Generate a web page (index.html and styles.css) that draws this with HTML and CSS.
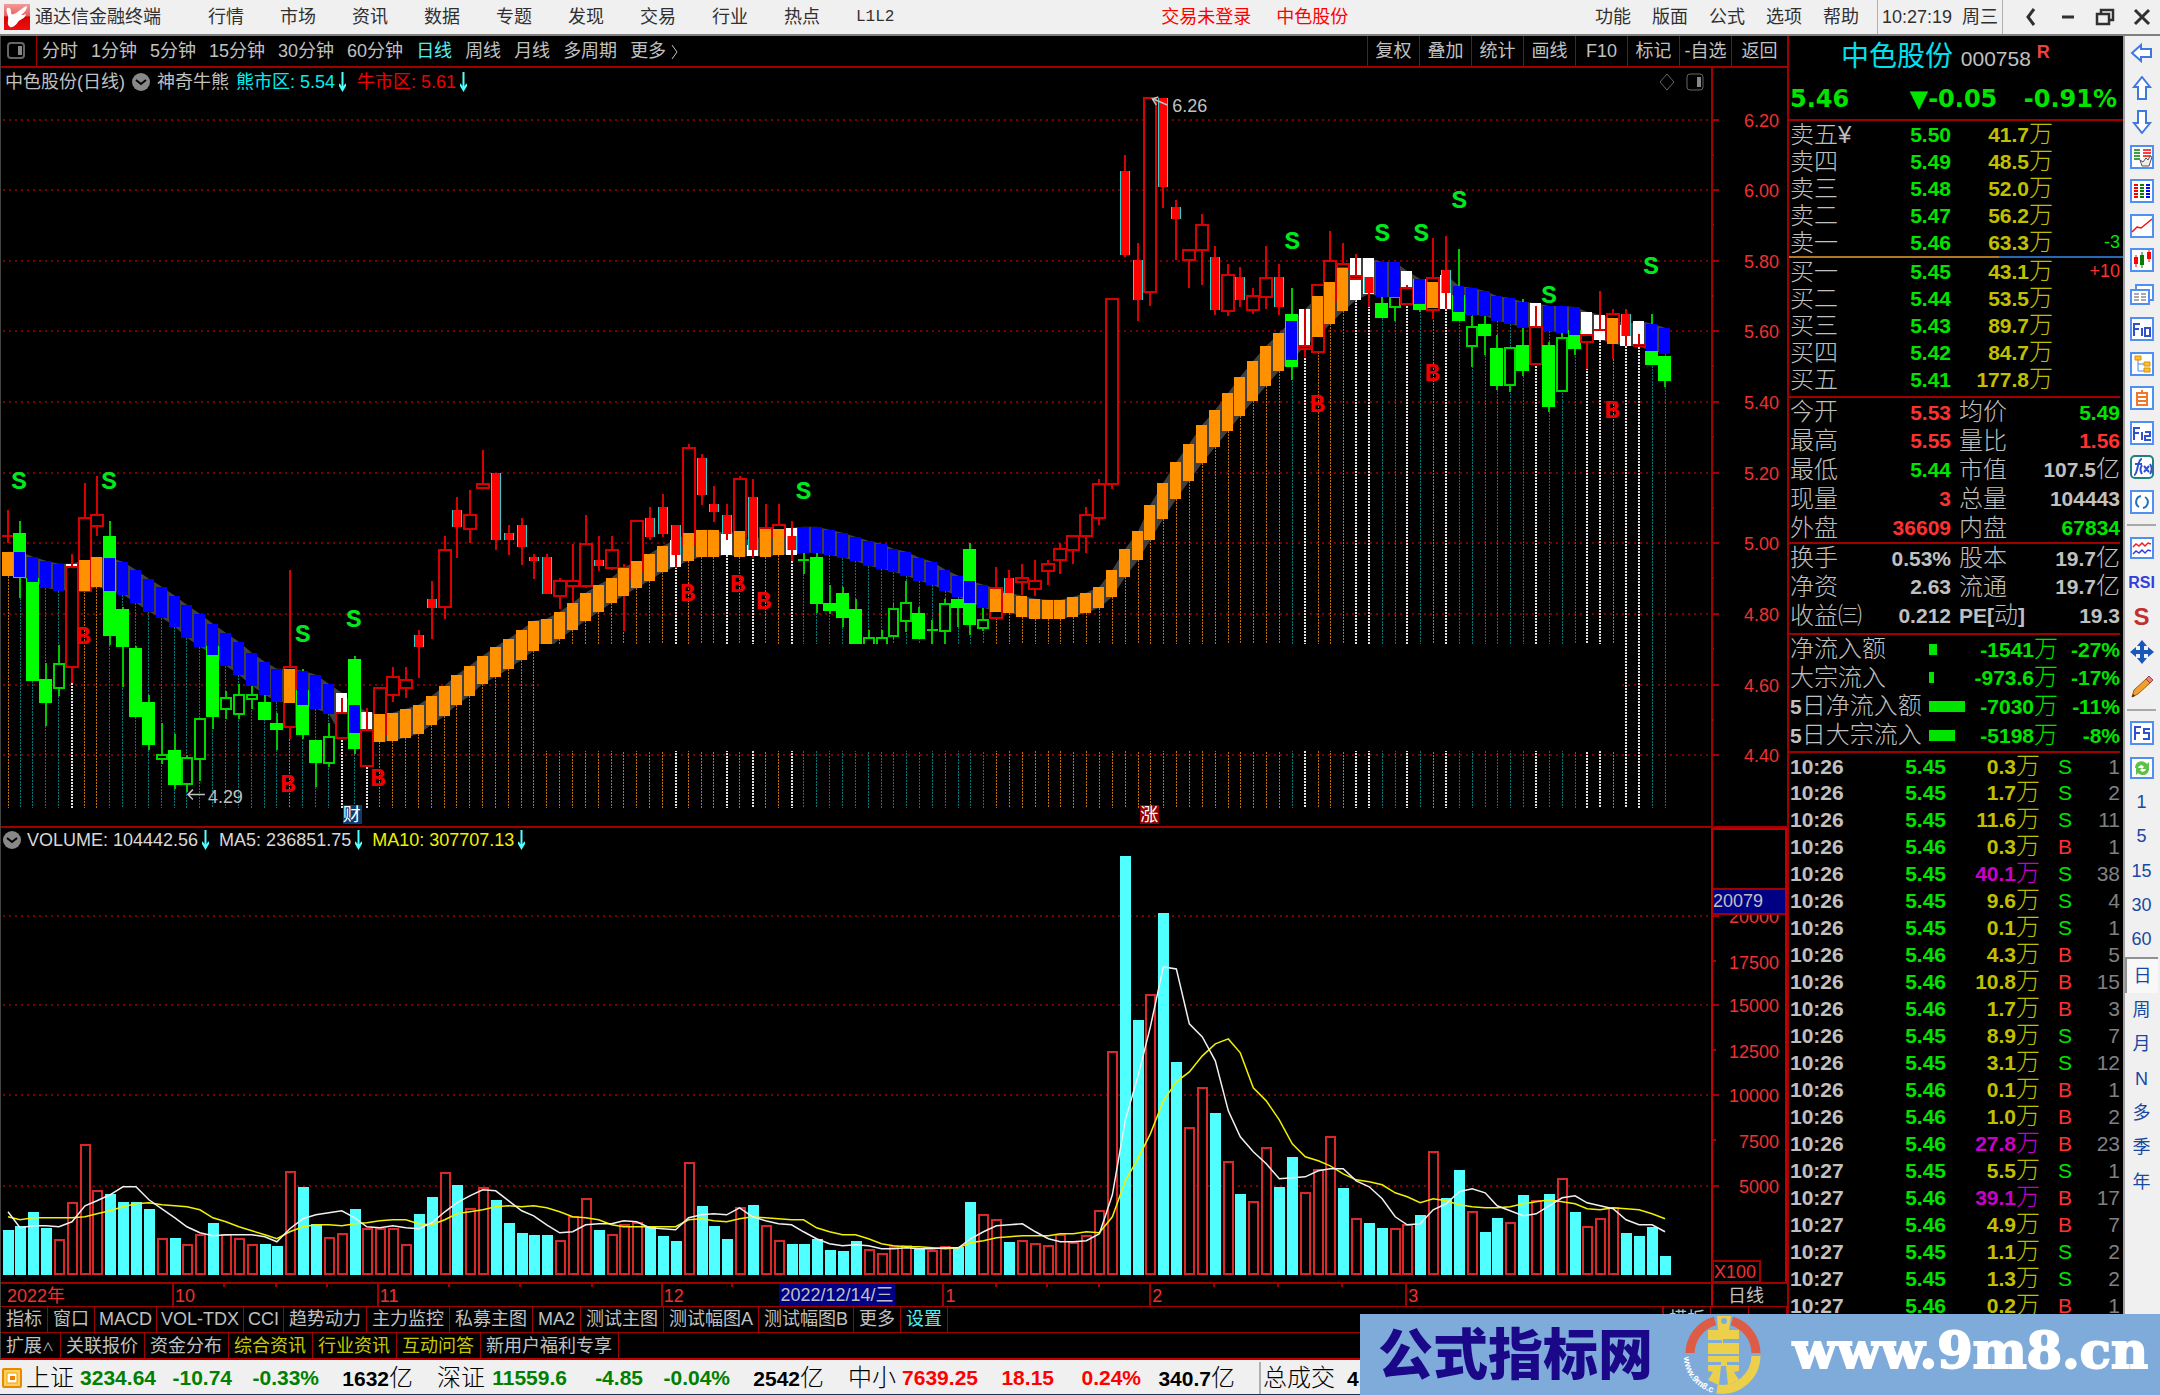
FILE: index.html
```html
<!DOCTYPE html>
<html lang="zh-CN">
<head>
<meta charset="utf-8">
<title>通达信金融终端</title>
<link rel="stylesheet" href="styles.css">
</head>
<body>
<header class="titlebar">
  <div class="brand">
    <svg class="logo" viewBox="0 0 26 26"><defs><linearGradient id="lg" x1="0" y1="0" x2="0" y2="1"><stop offset="0" stop-color="#f29a9a"/><stop offset=".45" stop-color="#e86060"/><stop offset=".5" stop-color="#d80000"/><stop offset="1" stop-color="#f01010"/></linearGradient></defs><rect width="26" height="26" fill="url(#lg)"/><path d="M3 4c3-1 4 1 4 4 0 2 1 3 3 2 5-2 7-6 13-8 0 4-3 7-6 9 2 0 3 0 5-1-1 5-6 5-8 8-2 3-5 6-8 5-4-3-1-7-2-11-1-3-2-5-1-8z" fill="#fff"/></svg>
    <span>通达信金融终端</span>
  </div>
  <nav class="menu">
    <button>行情</button><button>市场</button><button>资讯</button><button>数据</button><button>专题</button><button>发现</button><button>交易</button><button>行业</button><button>热点</button><button class="lv">L1L2</button>
  </nav>
  <div class="login"><span>交易未登录</span><span>中色股份</span></div>
  <nav class="tools"><button>功能</button><button>版面</button><button>公式</button><button>选项</button><button>帮助</button></nav>
  <div class="clock"><span>10:27:19</span><span>周三</span></div>
  <div class="winctl">
    <button aria-label="返回"><svg viewBox="0 0 20 20"><path d="M13 2L7 10l6 8" stroke-width="3"/></svg></button>
    <button aria-label="最小化"><svg viewBox="0 0 20 20"><path d="M4 10h12" stroke-width="3"/></svg></button>
    <button aria-label="还原"><svg viewBox="0 0 20 20"><path d="M2 7h12v10H2zM6 7V3h12v10h-4" stroke-width="2.5"/></svg></button>
    <button aria-label="关闭"><svg viewBox="0 0 20 20"><path d="M3 3l14 14M17 3L3 17" stroke-width="3"/></svg></button>
  </div>
</header>

<div class="workspace">
  <main class="left">
    <div class="periodbar">
      <button class="side" aria-label="侧栏"><svg viewBox="0 0 18 18"><rect x="1" y="1" width="16" height="15" rx="3"/><path d="M11 4h4v9h-4z" class="fill"/></svg></button>
      <nav class="periods"><button>分时</button><button>1分钟</button><button>5分钟</button><button>15分钟</button><button>30分钟</button><button>60分钟</button><button class="on">日线</button><button>周线</button><button>月线</button><button>多周期</button><button>更多&nbsp;<svg viewBox="0 0 8 16"><path d="M1 1l5 7-5 7"/></svg></button></nav>
      <nav class="acts"><button>复权</button><button>叠加</button><button>统计</button><button>画线</button><button>F10</button><button>标记</button><button>-自选</button><button>返回</button></nav>
    </div>

    <section class="pane">
      <div class="panehead">
        <span>中色股份(日线)</span>
        <svg class="drop" viewBox="0 0 18 18"><circle cx="9" cy="9" r="9"/><path d="M4 7l5 4 5-4"/></svg>
        <span>神奇牛熊</span>
        <span class="cyan">熊市区: 5.54<svg class="arr" viewBox="0 0 7 20"><path d="M3.500 0v18M0 12l3.500 6L7 12"/></svg></span>
        <span class="red">牛市区: 5.61<svg class="arr" viewBox="0 0 7 20"><path d="M3.500 0v18M0 12l3.500 6L7 12"/></svg></span>
        <span class="paneicons"><svg viewBox="0 0 46 20"><path d="M9 2l7 8-7 8-7-8z"/><rect x="29" y="2" width="16" height="16" rx="3"/><path d="M39 5h4v10h-4z" class="fill"/></svg></span>
        <span class="axiscell"></span>
      </div>
      <svg class="chart" id="price" viewBox="0 95 1787 731"></svg>
    </section>

    <section class="pane volpane">
      <div class="panehead volhead">
        <svg class="drop" viewBox="0 0 18 18"><circle cx="9" cy="9" r="9"/><path d="M4 7l5 4 5-4"/></svg>
        <span>VOLUME: 104442.56<svg class="arr" viewBox="0 0 7 20"><path d="M3.500 0v18M0 12l3.500 6L7 12"/></svg></span>
        <span>MA5: 236851.75<svg class="arr" viewBox="0 0 7 20"><path d="M3.500 0v18M0 12l3.500 6L7 12"/></svg></span>
        <span class="yellow">MA10: 307707.13<svg class="arr" viewBox="0 0 7 20"><path d="M3.500 0v18M0 12l3.500 6L7 12"/></svg></span>
        <span class="axiscell boxed"></span>
      </div>
      <svg class="chart" id="volume" viewBox="0 852 1787 454"></svg>
    </section>

    <nav class="tabs first">
      <button>指标</button><button>窗口</button><button class="en">MACD</button><button class="en">VOL-TDX</button><button class="en">CCI</button><button>趋势动力</button><button>主力监控</button><button>私募主图</button><button>MA2</button><button>测试主图</button><button>测试幅图A</button><button>测试幅图B</button><button>更多</button><button class="on">设置</button>
      <span class="tabright"><button>模板</button><button>+</button><button>−</button></span>
    </nav>
    <nav class="tabs second">
      <button>扩展<small>∧</small></button><button>关联报价</button><button>资金分布</button><button class="hot">综合资讯</button><button class="hot">行业资讯</button><button class="hot">互动问答</button><button>新用户福利专享</button>
    </nav>
  </main>

  <aside class="quote">
    <h1 class="qname">中色股份 <span>000758</span><sup>R</sup></h1>
    <div class="qprice"><span>5.46</span><span>▼-0.05</span><span>-0.91%</span></div>
    <table class="five ask">
      <tr><th>卖五¥</th><td>5.50</td><td>41.7<i>万</i></td><td></td></tr>
      <tr><th>卖四</th><td>5.49</td><td>48.5<i>万</i></td><td></td></tr>
      <tr><th>卖三</th><td>5.48</td><td>52.0<i>万</i></td><td></td></tr>
      <tr><th>卖二</th><td>5.47</td><td>56.2<i>万</i></td><td></td></tr>
      <tr><th>卖一</th><td>5.46</td><td>63.3<i>万</i></td><td class="g">-3</td></tr>
    </table>
    <div class="ratio"></div>
    <table class="five bid">
      <tr><th>买一</th><td>5.45</td><td>43.1<i>万</i></td><td class="r">+10</td></tr>
      <tr><th>买二</th><td>5.44</td><td>53.5<i>万</i></td><td></td></tr>
      <tr><th>买三</th><td>5.43</td><td>89.7<i>万</i></td><td></td></tr>
      <tr><th>买四</th><td>5.42</td><td>84.7<i>万</i></td><td></td></tr>
      <tr><th>买五</th><td>5.41</td><td>177.8<i>万</i></td><td></td></tr>
    </table>
    <table class="info">
      <tr><th>今开</th><td class="r">5.53</td><th>均价</th><td class="g">5.49</td></tr>
      <tr><th>最高</th><td class="r">5.55</td><th>量比</th><td class="r">1.56</td></tr>
      <tr><th>最低</th><td class="g">5.44</td><th>市值</th><td>107.5<i>亿</i></td></tr>
      <tr><th>现量</th><td class="r">3</td><th>总量</th><td>104443</td></tr>
      <tr><th>外盘</th><td class="r">36609</td><th>内盘</th><td class="g">67834</td></tr>
    </table>
    <table class="info fin">
      <tr><th>换手</th><td>0.53%</td><th>股本</th><td>19.7<i>亿</i></td></tr>
      <tr><th>净资</th><td>2.63</td><th>流通</th><td>19.7<i>亿</i></td></tr>
      <tr><th>收益㈢</th><td>0.212</td><th><b>PE[</b>动<b>]</b></th><td>19.3</td></tr>
    </table>
    <table class="flow">
      <tr><th>净流入额</th><td><s style="width:8px"></s></td><td>-1541<i>万</i></td><td>-27%</td></tr>
      <tr><th>大宗流入</th><td><s style="width:5px"></s></td><td>-973.6<i>万</i></td><td>-17%</td></tr>
      <tr><th><b>5</b>日净流入额</th><td><s style="width:36px"></s></td><td>-7030<i>万</i></td><td>-11%</td></tr>
      <tr><th><b>5</b>日大宗流入</th><td><s style="width:26px"></s></td><td>-5198<i>万</i></td><td>-8%</td></tr>
    </table>
    <table class="ticks">
      <tr><td>10:26</td><td>5.45</td><td>0.3<i>万</i></td><td class="g">S</td><td>1</td></tr>
      <tr><td>10:26</td><td>5.45</td><td>1.7<i>万</i></td><td class="g">S</td><td>2</td></tr>
      <tr><td>10:26</td><td>5.45</td><td>11.6<i>万</i></td><td class="g">S</td><td>11</td></tr>
      <tr><td>10:26</td><td>5.46</td><td>0.3<i>万</i></td><td class="r">B</td><td>1</td></tr>
      <tr><td>10:26</td><td>5.45</td><td class="big">40.1<i>万</i></td><td class="g">S</td><td>38</td></tr>
      <tr><td>10:26</td><td>5.45</td><td>9.6<i>万</i></td><td class="g">S</td><td>4</td></tr>
      <tr><td>10:26</td><td>5.45</td><td>0.1<i>万</i></td><td class="g">S</td><td>1</td></tr>
      <tr><td>10:26</td><td>5.46</td><td>4.3<i>万</i></td><td class="r">B</td><td>5</td></tr>
      <tr><td>10:26</td><td>5.46</td><td>10.8<i>万</i></td><td class="r">B</td><td>15</td></tr>
      <tr><td>10:26</td><td>5.46</td><td>1.7<i>万</i></td><td class="r">B</td><td>3</td></tr>
      <tr><td>10:26</td><td>5.45</td><td>8.9<i>万</i></td><td class="g">S</td><td>7</td></tr>
      <tr><td>10:26</td><td>5.45</td><td>3.1<i>万</i></td><td class="g">S</td><td>12</td></tr>
      <tr><td>10:26</td><td>5.46</td><td>0.1<i>万</i></td><td class="r">B</td><td>1</td></tr>
      <tr><td>10:26</td><td>5.46</td><td>1.0<i>万</i></td><td class="r">B</td><td>2</td></tr>
      <tr><td>10:26</td><td>5.46</td><td class="big">27.8<i>万</i></td><td class="r">B</td><td>23</td></tr>
      <tr><td>10:27</td><td>5.45</td><td>5.5<i>万</i></td><td class="g">S</td><td>1</td></tr>
      <tr><td>10:27</td><td>5.46</td><td class="big">39.1<i>万</i></td><td class="r">B</td><td>17</td></tr>
      <tr><td>10:27</td><td>5.46</td><td>4.9<i>万</i></td><td class="r">B</td><td>7</td></tr>
      <tr><td>10:27</td><td>5.45</td><td>1.1<i>万</i></td><td class="g">S</td><td>2</td></tr>
      <tr><td>10:27</td><td>5.45</td><td>1.3<i>万</i></td><td class="g">S</td><td>2</td></tr>
      <tr><td>10:27</td><td>5.46</td><td>0.2<i>万</i></td><td class="r">B</td><td>1</td></tr>
    </table>
  </aside>

  <nav class="rail">
    <div class="grp g14">
      <button aria-label="后退"><svg viewBox="0 0 24 24"><path class="ar" d="M2 12l9-8v4h10v8H11v4z"/></svg></button>
      <button aria-label="上一个"><svg viewBox="0 0 24 24"><path class="ar" d="M12 1l8 10h-4v12H8V11H4z"/></svg></button>
      <button aria-label="下一个"><svg viewBox="0 0 24 24"><path class="ar" d="M12 23l8-10h-4V1H8v12H4z"/></svg></button>
      <button aria-label="报价"><svg viewBox="0 0 24 24"><rect class="bx" x="1" y="1" width="22" height="22"/><path d="M4 5h6M4 8h6M4 11h6M4 14h6" stroke="#087a08" stroke-width="1.500"/><path d="M13 5h8M13 8h8M13 11h8" stroke="#f00" stroke-width="1.500"/><path d="M10 15l2 6h7l3-9-2-1-2 4-2-2-3 4z" fill="#eee" stroke="#555"/></svg></button>
      <button aria-label="列表"><svg viewBox="0 0 24 24"><rect class="bx" x="1" y="1" width="22" height="22"/><g stroke-width="2"><path d="M4 6h4M4 9h4M4 12h4M4 15h4M4 18h4" stroke="#f00"/><path d="M10 6h4M10 9h4M10 12h4M10 15h4M10 18h4" stroke="#087a08"/><path d="M16 6h4M16 9h4M16 12h4M16 15h4M16 18h4" stroke="#00f"/></g></svg></button>
      <button aria-label="分时图"><svg viewBox="0 0 24 24"><rect class="bx" x="1" y="1" width="22" height="22"/><path d="M2 18l5-5 4 1 5-4 6-5" stroke="#f01010" stroke-width="1.500" fill="none"/></svg></button>
      <button aria-label="K线图"><svg viewBox="0 0 24 24"><rect class="bx" x="1" y="1" width="22" height="22"/><path d="M6 7v12M19 2v12" stroke="#f00"/><path d="M4 9h4v7H4zM17 4h4v7h-4z" fill="#f00"/><path d="M12 4v16" stroke="#087a08"/><path d="M10 7h4v10h-4z" fill="#087a08"/></svg></button>
      <button aria-label="资讯"><svg viewBox="0 0 24 24"><path class="bx" d="M6 2h17v15h-4V7H6z"/><path class="bx" d="M1 7h18v14H1z"/><path d="M4 11h5M11 11h5M4 14h5M11 14h5M4 17h5M11 17h5" stroke="#555"/></svg></button>
      <button aria-label="F10"><svg viewBox="0 0 24 24"><rect class="bx" x="1" y="1" width="22" height="22"/><path class="tx" d="M4 19V7h6M4 12h5M12 11v8M15 11h5v8h-5z"/></svg></button>
      <button aria-label="结构"><svg viewBox="0 0 24 24"><rect class="bx" x="1" y="1" width="22" height="22"/><path d="M8 6v13h6M8 12h6" fill="none" stroke="#4a88e8"/><path d="M5 4h6v4H5zM14 10h6v4h-6zM14 16h6v4h-6z" fill="#ffc030" stroke="#d89000"/></svg></button>
      <button aria-label="自选"><svg viewBox="0 0 24 24"><rect class="bx" x="1" y="1" width="22" height="22"/><path d="M12 4v3M7 7h10v12H7zM7 11h10M7 15h10" fill="none" stroke="#f07828" stroke-width="2"/></svg></button>
      <button aria-label="F12"><svg viewBox="0 0 24 24"><rect class="bx" x="1" y="1" width="22" height="22"/><path class="tx" d="M4 19V7h6M4 12h5M12 11v8M15 11h5v4h-5v4h6"/></svg></button>
      <button aria-label="公式"><svg viewBox="0 0 24 24"><rect x="1" y="1" width="22" height="22" rx="4" fill="#fff" stroke="#208080" stroke-width="2"/><path class="tx" d="M4 20c4 0 3-16 8-16M5 9h7M12 10c-2 3-2 6 0 9M14 11l5 6M19 11l-5 6M20 9c2 3 2 7 0 10"/></svg></button>
      <button aria-label="刷新周期"><svg viewBox="0 0 24 24"><rect class="bx" x="1" y="1" width="22" height="22"/><path d="M9 17a6 6 0 0 1 2-11M15 7a6 6 0 0 1-2 11" fill="none" stroke="#2070c0" stroke-width="2"/></svg></button>
    </div>
    <hr>
    <div class="grp g5">
      <button aria-label="多图"><svg viewBox="0 0 24 24"><rect class="bx" x="1" y="2" width="22" height="20"/><path d="M3 11l3-3 3 2 3-3 3 3 3-3 3 1" fill="none" stroke="#f02020" stroke-width="1.500"/><path d="M3 18l3-3 3 2 3-3 3 3 3-3 3 1" fill="none" stroke="#3040e0" stroke-width="1.500"/></svg></button>
      <button class="rsi">RSI</button>
      <button aria-label="资金" class="money">S</button>
      <button aria-label="移动"><svg viewBox="0 0 24 24"><path d="M12 0l5 6h-3v4h4V7l6 5-6 5v-3h-4v4h3l-5 6-5-6h3v-4H6v3l-6-5 6-5v3h4V6H7z" fill="#1858b8"/></svg></button>
      <button aria-label="画笔"><svg viewBox="0 0 24 24"><path d="M2 22l2-7L16 4l4 4L8 19z" fill="#f0a030" stroke="#a06010"/><path d="M16 4l3-3 4 4-3 3z" fill="#e08080" stroke="#a04040"/><path d="M2 22l1-3 2 2z" fill="#222"/></svg></button>
    </div>
    <hr>
    <div class="grp g14">
      <button aria-label="F5"><svg viewBox="0 0 24 24"><rect class="bx" x="1" y="1" width="22" height="22"/><path class="tx" d="M5 19V6h6M5 12h5M20 8h-6v4h5v6h-6"/></svg></button>
      <button aria-label="刷新"><svg viewBox="0 0 24 24"><rect class="bx" x="1" y="2" width="22" height="20"/><path d="M5 12c0-7 8-9 12-4l2-2v7h-7l2-2c-2-3-5-2-6 1zM19 13c0 6-7 8-11 4l-2 2v-7h6l-2 2c2 3 5 2 6-1z" fill="#60c048"/></svg></button>
      <button>1</button><button>5</button><button>15</button><button>30</button><button>60</button><button class="sel">日</button><button>周</button><button>月</button><button>N</button><button>多</button><button>季</button><button>年</button>
    </div>
  </nav>
</div>

<footer class="status">
  <svg class="sicon" viewBox="0 0 20 20"><rect x="1" y="1" width="18" height="18" rx="1" fill="#ffd060" stroke="#e88a00" stroke-width="2"/><path d="M5 5h10v10H5z" fill="#fff" stroke="#f0a000"/><path d="M8 8h5v4H8z" fill="#f08000"/></svg>
  <div class="idx g"><em>上证</em><span>3234.64</span><span>-10.74</span><span>-0.33%</span><span class="amt">1632<i>亿</i></span></div>
  <div class="idx g"><em>深证</em><span>11559.6</span><span>-4.85</span><span>-0.04%</span><span class="amt">2542<i>亿</i></span></div>
  <div class="idx r"><em>中小</em><span>7639.25</span><span>18.15</span><span>0.24%</span><span class="amt">340.7<i>亿</i></span></div>
  <div class="total"><em>总成交</em><span>4174<i>亿</i></span></div>
</footer>

<a class="banner" href="#">
  <span class="bname">公式指标网</span>
  <svg class="coin" viewBox="0 0 80 80">
    <path d="M7 38A34 34 0 0 1 32 6" fill="none" stroke="#dc5c46" stroke-width="9"/>
    <path d="M49 6a34 34 0 0 1 24 32" fill="none" stroke="#dc5c46" stroke-width="9"/>
    <path d="M73 41a34 34 0 0 1-39 33" fill="none" stroke="#ecd04c" stroke-width="9"/>
    <path d="M34 1h14l-2 14h10v9H40v4h16v11H25V28h14v-3H25V15h10zM25 41h31v6H44v3h12v6l-5 1 5 8-11 5-2-19h-5l-2 19-11-5 5-8-5-1v-6h13v-3H25z" fill="#ecd04c"/>
    <circle cx="41" cy="6" r="3" fill="#7fabda"/>
    <path id="arc" d="M1 42A38 38 0 0 0 31 78" fill="none"/>
    <text font-size="9" font-weight="bold" fill="#fff"><textPath href="#arc">www.9m8.cn</textPath></text>
  </svg>
  <span class="burl">www.9m8.cn</span>
</a>
<script src="chart.js"></script>
</body>
</html>
```

FILE: styles.css
```css
* { box-sizing: border-box; }
body {
  margin: 0;
  min-height: 100vh;
  display: flex;
  flex-direction: column;
  position: relative;
  overflow-x: hidden;
  background: #000;
  color: #c0c0c0;
  font: 18px/24px "Liberation Sans", "Noto Sans CJK SC", sans-serif;
}
button {
  font: inherit;
  color: inherit;
  background: none;
  border: 0;
  padding: 0;
  white-space: nowrap;
}
i, em { font-style: normal; }

/* title bar */
.titlebar {
  display: flex;
  align-items: center;
  height: 36px;
  background: #f0f0f0;
  border-bottom: 2px solid #808080;
  color: #303030;
}
.brand { display: flex; align-items: center; gap: 5px; width: 208px; padding-left: 4px; }
.logo { width: 26px; height: 26px; }
.menu { display: flex; gap: 36px; }
.lv { font-family: "Liberation Mono", monospace; font-size: 16px; }
.login { display: flex; gap: 25px; margin: 0 auto; padding-left: 20px; color: #f00; }
.tools { display: flex; gap: 21px; padding-right: 18px; }
.clock { display: flex; gap: 10px; height: 100%; align-items: center; padding: 0 4px; border: solid #b0b0b0; border-width: 0 1px; }
.winctl { display: flex; gap: 17px; padding: 0 8px 0 18px; }
.winctl svg { display: block; width: 20px; height: 20px; fill: none; stroke: #303030; }

/* workspace columns */
.workspace { flex: 1; display: grid; grid-template-columns: minmax(0, 1fr) 336px 37px; align-items: stretch; }
.left { border-left: 1px solid #444; }
.quote { border-left: 2px solid #a00000; height: 1323px; overflow: hidden; }

.periodbar { display: flex; height: 32px; border-bottom: 2px solid #a00000; }
.side { width: 36px; border-right: 1px solid #a00000; padding-left: 6px; }
.side svg, .paneicons svg { display: block; fill: none; stroke: #666; stroke-width: 2; }
.side svg { width: 18px; height: 18px; }
.fill { fill: #888; stroke: none; }
.periods { display: flex; gap: 13px; padding-left: 5px; }
.periods svg { width: 8px; height: 16px; fill: none; stroke: #c0c0c0; stroke-width: 1; vertical-align: middle; }
.periods .on, .tabs .on { color: #50f0f0; }
.acts { display: flex; margin-left: auto; }
.acts button { min-width: 52px; border-left: 1px solid #a00000; }
.acts button:last-child { min-width: 56px; }

.panehead { display: flex; align-items: center; gap: 7px; height: 27px; padding-left: 4px; white-space: nowrap; }
.volpane { border-top: 2px solid #a00000; }
.volhead { height: 25px; padding-left: 2px; gap: 6px; color: #d8d8d8; }
.volhead > span { margin-right: 4px; }
.panehead .axiscell { width: 76px; align-self: stretch; margin: 0; border-left: 2px solid #a00000; }
.panehead .boxed { margin-left: auto; border: solid #c00000; border-width: 2px 2px 0 2px; }
.drop { width: 18px; height: 18px; fill: #888; }
.drop path { fill: none; stroke: #000; stroke-width: 2; }
.arr { width: 7px; height: 20px; margin-left: 4px; vertical-align: -4px; fill: none; stroke: #50ffff; stroke-width: 2; }
.cyan { color: #00f0f0; }
.red { color: #f00000; }
.yellow { color: #f0f000; }
.red, .cyan { margin-right: 4px; }
.paneicons { margin-left: auto; }
.paneicons svg { width: 46px; height: 20px; stroke-width: 1; }
.chart { display: block; width: 100%; height: auto; }

.tabs { display: flex; height: 26px; border-top: 1px solid #a00000; line-height: 25px; }
.tabs button { padding: 0 6px 0 5px; border-right: 1px solid #a00000; }
.first button { padding: 0 5px; }
.first .en { padding: 0 4px; }
.tabs small { font-size: 12px; }
.tabs .hot { color: #c8c800; }
.tabright { display: flex; margin-left: auto; border-left: 2px solid #a00000; }
.tabright button { min-width: 38px; }
.second { height: 28px; line-height: 27px; border-bottom: 2px solid #c00000; }

/* quote panel */
.qname { margin: 0; height: 42px; line-height: 41px; padding-left: 52px; font-size: 28px; font-weight: 400; color: #00e0f0; white-space: nowrap; }
.qname span { font-size: 21px; color: #c0c0c0; }
.qname sup { font-size: 18px; line-height: 18px; color: #f04040; margin-left: 6px; vertical-align: 8px; font-weight: 700; }
.qprice { display: flex; justify-content: space-between; height: 43px; padding: 0 6px 0 1px; border-bottom: 2px solid #a00000; font: bold 24px/42px "DejaVu Sans", sans-serif; color: #00e400; }
.qprice span:nth-child(2) { margin-left: 34px; }
.quote table { table-layout: fixed; width: 331px; border-collapse: collapse; font-weight: 700; font-size: 21px; line-height: 25px; }
.quote td, .quote th { padding: 0; height: 27px; text-align: right; white-space: nowrap; }
.quote th, .quote i { font-size: 24px; line-height: 20px; font-weight: 300; }
.quote th { text-align: left; padding-left: 1px; overflow: visible; }
.quote th b { font-size: 21px; font-weight: 700; }
.g { color: #00e400; }
.r { color: #ff3030; }
.five td:nth-child(2) { width: 70px; color: #00e400; }
.five td:nth-child(3) { width: 102px; color: #c0c000; }
.five td:nth-child(4) { width: 67px; font-size: 18px; font-weight: 400; }
.five th { width: 92px; }
.ratio { height: 2px; background: linear-gradient(90deg, #b07820 63%, #2868b0 63%); }
.quote .bid { margin-bottom: 3px; }
.info, .flow, .ticks { border-top: 2px solid #a00000; }
.quote .info td, .quote .info th, .quote .flow td, .quote .flow th { height: 29px; }
.info th { width: 72px; }
.info td:nth-child(2) { width: 90px; }
.info th:nth-child(3) { padding-left: 8px; }
.quote .fin { margin-bottom: 3px; }
.flow th { width: 140px; }
.flow td { color: #00e400; }
.flow td:nth-child(2) { width: 36px; text-align: left; }
.flow td:nth-child(3) { width: 93px; }
.flow s { display: block; height: 11px; background: #00e400; }
.quote .flow { margin-bottom: 1px; }
.ticks td:nth-child(1) { width: 75px; text-align: left; padding-left: 1px; }
.ticks td:nth-child(2) { width: 82px; color: #00e400; }
.ticks td:nth-child(3) { width: 94px; color: #c0c000; }
.ticks td:nth-child(4) { width: 32px; font-weight: 400; }
.ticks td:nth-child(5) { color: #808080; font-weight: 400; }
.ticks td.big { color: #c800c8; }

/* right tool rail */
.rail { background: #f0f0f0; border-left: 2px solid #a0a0a0; padding-right: 2px; color: #1848a0; }
.grp { display: flex; flex-direction: column; }
.grp button { flex: 1; display: flex; align-items: center; justify-content: center; }
.grp svg { width: 24px; height: 24px; }
.g14 { height: 483px; }
.g5 { height: 173px; }
.rail hr { margin: 5px 2px; border: 0; height: 2px; background: #a8a8a8; }
.ar { fill: #fff; stroke: #4078e0; stroke-width: 2; }
.bx { fill: #fff; stroke: #5090f0; stroke-width: 2; }
.tx { fill: none; stroke: #3050d0; stroke-width: 2; }
.rsi { font-weight: 700; font-size: 16px; color: #3040d8; }
.money { font-weight: 700; font-size: 24px; color: #c03030; }
.sel { border: solid #909090; border-width: 2px 0 0 2px; background: #f8f8f8; }

/* status bar */
.status { display: flex; align-items: center; height: 35px; padding: 2px 0 0 2px; background: #f0f0f0; border-bottom: 1px solid #203050; color: #000; font-weight: 700; font-size: 21px; white-space: nowrap; overflow: hidden; }
.sicon { width: 20px; height: 20px; margin-right: 4px; }
.status em, .status i { font-size: 24px; font-weight: 300; color: #000; }
.idx { display: grid; grid-template-columns: 53px 77px 76px 87px 94px; width: 411px; align-items: center; }
.idx span { text-align: right; }
.status .g { color: #008000; }
.status .r { color: #f00; }
.status .amt { color: #000; }
.total { display: flex; gap: 12px; align-items: center; height: 100%; border-left: 2px solid #b0b0b0; padding-left: 2px; }

/* site banner floating over the bottom corner */
.banner { position: absolute; right: 0; bottom: 0; width: 800px; height: 81px; display: flex; align-items: center; padding: 0 12px 0 18px; background: #7fabda; text-decoration: none; white-space: nowrap; }
.bname, .burl { margin-bottom: 10px; }
.bname { font: 900 55px/70px "Noto Sans CJK SC", sans-serif; color: #1a0888; }
.coin { width: 80px; height: 80px; margin: 0 auto; }
.burl { font: bold 51px/70px "DejaVu Serif", serif; color: #fff; -webkit-text-stroke: 2px #fff; }

/* chart text */
.chart text { font-family: "Liberation Sans", "Noto Sans CJK SC", sans-serif; font-size: 18px; fill: #f03030; }
.chart text.end { text-anchor: end; }
.chart text.plain { fill: #c0c0c0; }
.chart text.sig { font-family: "Liberation Mono", monospace; font-weight: 700; font-size: 26px; text-anchor: middle; }
.chart text.S { fill: #00e820; }
.chart text.B { fill: #f00000; }
.chart text.white { fill: #fff; }
```

FILE: chart.js
```js
const NS = 'http://www.w3.org/2000/svg';
const RED = '#a00000', FRAME = '#c00000';
const x = i => Math.round(6.5 + 12.853 * i);

function add(svg, tag, attrs, text) {
  const el = document.createElementNS(NS, tag);
  for (const k in attrs) el.setAttribute(k, attrs[k]);
  if (text) el.textContent = text;
  svg.appendChild(el);
}
const rect = (s, a, b, w, h, fill, extra) =>
  add(s, 'rect', { x: a, y: b, width: w, height: Math.max(h, 1), fill, 'shape-rendering': 'crispEdges', ...extra });
const line = (s, x1, y1, x2, y2, stroke, extra) =>
  add(s, 'line', { x1, y1, x2, y2, stroke, 'stroke-width': 2, 'shape-rendering': 'crispEdges', ...extra });

// ribbon colour, ribbon top, ribbon bottom, candle kind, high, low, body top, body bottom
const bars = `o 552 576 r 510 543 536 537
b 552 577 g 521 598 533 578
b 557 582 g 578 681 578 681
b 561 588 g 663 726 679 703
b 564 591 h 645 696 664 688
w 564 590 r 554 683 567 667
o 560 591 r 483 518 518 591
o 557 587 r 476 536 515 526
b 558 591 g 521 645 536 636
b 562 595 g 607 687 609 647
b 570 603 g 646 717 648 717
b 579 612 g 695 750 702 745
b 587 618 h 723 764 755 759
b 596 627 g 734 789 750 785
b 605 638 h 755 792 758 784
b 614 647 h 719 781 719 759
b 624 655 g 646 729 646 717
b 633 666 h 691 719 698 709
b 642 675 h 684 719 695 714
b 653 686 h 686 709 695 699
b 662 695 g 695 720 702 720
b 669 702 g 713 750 723 730
o 669 703 r 570 739 667 727
b 671 705 g 669 739 690 735
b 675 709 g 740 787 740 763
b 684 714 h 723 767 737 763
w 693 737 r 698 738 713 738
b 705 733 g 656 754 659 749
w 712 737 r 708 766 730 766
o 714 742 r 688 735 688 735
o 713 741 r 667 702 677 695
o 709 738 r 667 698 680 688
o 705 734 c 630 678 635 647
o 696 725 c 581 639 599 608
o 686 716 r 536 619 550 607
o 675 705 c 497 558 510 527
o 666 696 r 490 543 515 529
o 656 684 r 450 489 484 488
o 647 677 c 473 550 473 540
o 639 669 c 525 555 533 540
o 630 660 c 518 565 525 547
o 621 651 c 554 579 557 561
o 619 651 c 554 594 557 594
o 612 639 r 578 609 581 596
o 603 630 r 544 603 581 586
o 593 621 r 515 588 544 586
o 585 612 c 536 571 560 566
o 578 603 r 536 570 550 568
o 568 596 r 564 631 568 578
o 561 588 r 521 570 521 570
o 554 581 c 507 540 518 537
o 546 572 c 494 537 507 534
w 540 567 c 525 568 525 555
o 533 561 r 444 544 448 544
o 530 557 c 454 505 458 495
o 530 557 c 486 522 504 512
w 534 555 c 504 540 515 534
o 531 557 r 476 537 479 537
w 545 556 c 479 558 497 550
o 529 557 r 504 537 528 537
o 529 555 r 504 537 525 537
w 528 555 c 521 561 536 550
b 527 553 h 553 574 560 561
b 527 553 g 553 613 557 604
b 530 555 g 585 614 603 611
b 533 558 g 587 627 593 618
b 537 561 g 599 646 609 649
b 541 566 h 630 660 638 655
b 544 569 h 630 660 638 650
b 549 572 h 603 639 609 636
b 552 576 h 581 632 603 621
b 558 581 g 607 639 613 639
b 562 585 h 620 644 630 631
b 570 591 h 599 644 604 631
b 576 597 g 599 627 599 608
b 581 603 g 543 635 549 625
b 585 608 h 608 631 620 628
o 589 612 r 567 618 588 618
o 593 613 c 570 593 578 593
o 596 617 r 564 595 578 582
o 599 619 r 560 596 581 589
o 600 619 r 560 585 564 571
o 600 619 r 543 574 549 560
o 597 617 r 536 564 536 550
o 593 613 r 507 553 515 536
o 587 608 r 479 525 484 518
o 570 597 r 299 489 299 484
o 549 577 c 155 257 171 255
o 531 560 c 243 321 260 300
o 505 540 r 98 306 98 292
o 483 519 c 98 208 98 187
o 462 499 c 200 260 207 219
o 444 481 r 250 288 250 260
o 425 463 r 214 285 225 250
o 410 447 c 246 315 257 310
o 393 431 r 264 316 275 311
o 377 416 c 267 307 277 300
o 361 401 r 288 314 296 310
o 346 386 r 246 309 278 297
o 333 371 c 264 315 277 307
b 321 360 g 288 380 314 367
w 309 346 r 309 357 346 349
o 296 337 r 285 352 285 352
o 282 324 r 231 300 261 300
o 268 311 r 243 268 264 268
w 258 300 r 254 276 276 279
w 258 294 c 277 307 277 293
b 262 297 g 297 318 303 318
b 262 297 h 297 321 297 307
w 271 288 r 285 304 288 304
b 279 304 g 279 312 279 310
o 282 308 r 238 319 278 310
w 275 309 c 236 309 270 293
b 286 312 g 249 321 295 321
b 288 315 h 316 367 327 346
b 291 316 g 315 355 324 336
b 296 321 g 335 390 348 386
b 298 324 h 348 392 348 385
b 302 328 g 299 376 345 371
w 303 327 r 306 364 327 364
b 306 331 g 342 412 345 407
b 306 333 h 333 391 338 391
b 307 335 g 330 355 330 349
w 312 335 r 335 369 335 342
w 315 340 r 291 331 330 331
o 318 344 r 309 359 314 340
w 325 346 c 309 346 314 336
w 321 347 r 334 347 345 347
b 324 351 g 314 365 351 365
b 328 354 g 356 387 356 381`.split('\n').map(r => {
  const p = r.split(' ');
  return { rc: p[0], rt: +p[1], rb: +p[2], kind: p[3], hi: +p[4], lo: +p[5], bt: +p[6], bb: +p[7] };
});

const price = document.getElementById('price');
const ribbonFill = { o: '#ff9000', b: '#0000ff', w: '#ffffff' };
const stemStroke = { o: '#c07000', b: '#007878', w: '#e0e0e0' };

// price grid and scale
for (let k = 0; k < 10; k++) {
  const y = Math.round(119.500 + 70.650 * k);
  line(price, 2, y, 1711, y, '#780000', { 'stroke-dasharray': '2 4' });
  line(price, 1711, y, 1719, y, RED);
  if (k < 9) line(price, 1711, y + 35, 1714, y + 35, RED);
  add(price, 'text', { x: 1779, y: y + 7, class: 'end' }, (6.2 - 0.2 * k).toFixed(2));
}
line(price, 1712, 95, 1712, 826, RED);

bars.forEach((b, i) => line(price, x(i), b.rb, x(i), 808, stemStroke[b.rc], { 'stroke-dasharray': '2 1', 'stroke-width': b.rc === 'w' ? 2 : 1 }));

// shadow joining neighbouring ribbon blocks
const upperEdge = bars.map((b, i) => x(i) + ',' + b.rt);
const lowerEdge = bars.map((b, i) => x(i) + ',' + b.rb).reverse();
add(price, 'polygon', { points: upperEdge.concat(lowerEdge).join(' '), fill: '#404040' });

function ribbon(b, i) { rect(price, x(i) - 6, b.rt, 11, b.rb - b.rt, ribbonFill[b.rc]); }
function candle(b, i) {
  const c = x(i), h = b.bb - b.bt, up = b.kind === 'r' || b.kind === 'c';
  line(price, c, b.hi, c, b.lo, up ? '#d80000' : '#00c800');
  if (b.kind === 'g') rect(price, c - 7, b.bt, 13, h, '#00ff00');
  if (b.kind === 'c') {
    rect(price, c - 5, b.bt, 10, h, '#30d0d0');
    rect(price, c - 4, b.bt, 8, h, '#ff0000');
  }
  if (b.kind === 'r') rect(price, c - 6, b.bt, 12, h, '#000', { stroke: '#d80000', 'stroke-width': h > 2 ? 2 : 1 });
  if (b.kind === 'h') rect(price, c - 5, b.bt, 10, h, '#000', { stroke: '#00d800', 'stroke-width': h > 2 ? 2 : 1 });
}
bars.forEach((b, i) => {
  if (b.rc === 'w') { ribbon(b, i); candle(b, i); } else { candle(b, i); ribbon(b, i); }
});

rect(price, 538, 644, 1082, 107, '#000');

[[18, 489], [108, 489], [302, 642], [353, 627], [803, 499], [1292, 249], [1382, 241], [1421, 241], [1459, 208], [1549, 303], [1651, 274]]
  .forEach(p => add(price, 'text', { x: p[0], y: p[1], class: 'sig S' }, 'S'));
[[82, 644], [287, 792], [377, 786], [687, 601], [737, 592], [763, 609], [1317, 412], [1432, 381], [1612, 418]]
  .forEach(p => add(price, 'text', { x: p[0], y: p[1], class: 'sig B' }, 'B'));

add(price, 'path', { d: 'M204 795h-17M192 790l-5 5 5 5', fill: 'none', stroke: '#c0c0c0', 'stroke-width': 1.500 });
add(price, 'text', { x: 207, y: 803, class: 'plain' }, '4.29');
add(price, 'path', { d: 'M1167 105l-14-6M1158 97l-6 2 4 6', fill: 'none', stroke: '#c0c0c0', 'stroke-width': 1.500 });
add(price, 'text', { x: 1172, y: 112, class: 'plain' }, '6.26');
rect(price, 342, 805, 19, 19, '#0a3c70');
add(price, 'text', { x: 342, y: 821, class: 'white' }, '财');
rect(price, 1140, 805, 19, 19, '#900000');
add(price, 'text', { x: 1140, y: 821, class: 'white' }, '涨');

// volume: bar direction and top edge
const vols = ('c1229 c1225 c1211 c1227 r1239 r1202 r1144 r1190 c1193 c1201 c1201 c1208 r1238 c1237 r1244 r1234 c1222 r1234 r1238 r1244 ' +
  'c1243 c1245 r1171 c1186 c1223 r1237 r1233 c1208 r1228 r1228 r1228 r1244 c1213 c1196 r1172 c1184 r1208 r1187 c1199 c1222 ' +
  'c1232 c1234 c1234 r1240 r1216 r1198 c1229 r1234 r1224 r1222 c1226 c1235 c1240 r1162 c1205 c1225 c1238 r1207 c1204 r1225 ' +
  'r1240 c1243 c1243 c1238 c1249 c1250 c1240 r1249 r1253 r1246 r1245 c1248 r1250 r1246 c1246 c1201 r1214 r1219 c1241 r1240 ' +
  'r1243 r1245 r1234 r1242 r1235 r1210 r1051 c855 c1019 r994 c912 c1061 r1127 r1087 c1112 r1161 c1193 r1201 r1147 c1186 ' +
  'c1156 r1192 r1169 r1136 c1187 r1218 c1222 c1227 r1228 r1224 c1214 r1151 c1197 c1169 r1211 c1231 c1217 r1222 c1194 r1200 ' +
  'c1193 r1178 c1211 r1226 r1218 r1207 c1232 c1235 c1226 c1255').split(' ').map(v => ({ c: v[0], t: +v.slice(1) }));

const volume = document.getElementById('volume');
[915, 1004, 1094, 1185].forEach((y, k) => {
  line(volume, 2, y, 1711, y, '#780000', { 'stroke-dasharray': '2 4' });
  line(volume, 1713, y, 1719, y, RED);
  add(volume, 'text', { x: 1779, y: y + 7, class: 'end' }, String(20000 - 5000 * k));
  if (k < 3) {
    line(volume, 1713, y + 45, 1716, y + 45, RED);
    add(volume, 'text', { x: 1779, y: y + 53, class: 'end' }, String(17500 - 5000 * k));
  }
});
vols.forEach((v, i) => {
  if (v.c === 'c') rect(volume, x(i) - 5, v.t, 11, 1274 - v.t, '#50ffff');
  else rect(volume, x(i) - 4, v.t, 9, 1273 - v.t, '#000', { stroke: '#d82828', 'stroke-width': 2 });
});
function average(n, head, stroke) {
  const pts = vols.map((v, i) => {
    const y = i < head.length ? head[i] : vols.slice(i - n + 1, i + 1).reduce((s, q) => s + q.t, 0) / n;
    return x(i) + ',' + Math.round(y);
  });
  add(volume, 'polyline', { points: pts.join(' '), fill: 'none', stroke, 'stroke-width': 1.500 });
}
average(10, [1216, 1219, 1217, 1217, 1217, 1217, 1216, 1213, 1210], '#f0f000');
average(5, [1211, 1227, 1225, 1225], '#f0f0f0');

line(volume, 1712, 852, 1712, 1306, FRAME);
line(volume, 1786, 852, 1786, 1282, FRAME);
rect(volume, 1713, 889, 72, 23, '#000084');
line(volume, 1713, 888, 1785, 888, RED);
line(volume, 1713, 913, 1785, 913, RED);
add(volume, 'text', { x: 1713, y: 906, class: 'plain' }, '20079');
rect(volume, 1713, 1260, 47, 21, '#000', { stroke: RED, 'stroke-width': 2 });
add(volume, 'text', { x: 1714, y: 1277 }, 'X100');

// date axis
line(volume, 0, 1282, 1787, 1282, RED);
[[172, '10'], [377, '11'], [661, '12'], [943, '1'], [1150, '2'], [1406, '3']].forEach(d => {
  line(volume, d[0], 1282, d[0], 1306, RED);
  add(volume, 'text', { x: d[0] + 2, y: 1301 }, d[1]);
});
[223, 275, 326, 448, 519, 591, 731, 996, 1047, 1099, 1214, 1278, 1342].forEach(t => line(volume, t, 1282, t, 1286, RED));
add(volume, 'text', { x: 6, y: 1301 }, '2022年');
rect(volume, 778, 1283, 117, 22, '#000084');
add(volume, 'text', { x: 780, y: 1300, class: 'plain' }, '2022/12/14/三');
add(volume, 'text', { x: 1728, y: 1301, class: 'plain' }, '日线');
```
